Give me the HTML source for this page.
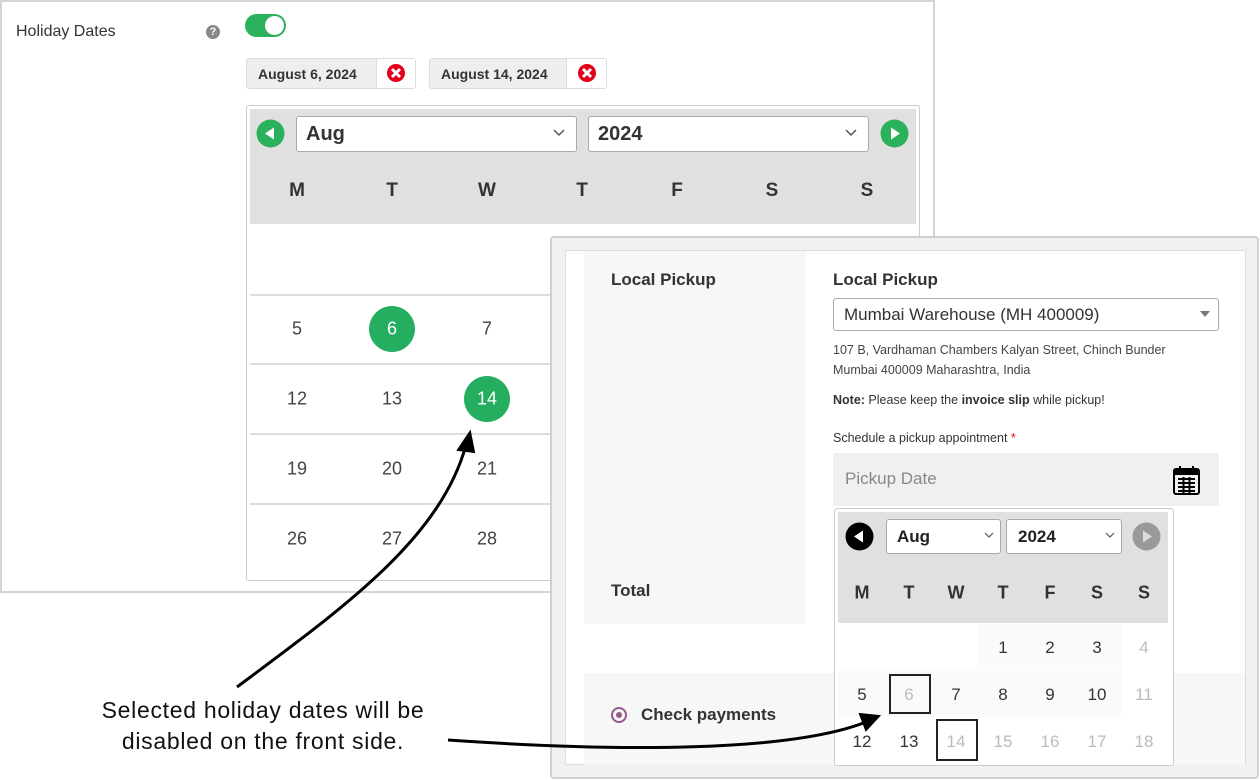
<!DOCTYPE html>
<html><head><meta charset="utf-8"><style>
*{margin:0;padding:0;box-sizing:border-box}
body{width:1260px;height:780px;background:#fff;position:relative;overflow:hidden;font-family:"Liberation Sans",sans-serif;color:#333}
.a{position:absolute}
.c{position:absolute;transform:translate(-50%,-50%);white-space:nowrap}
.ln{position:absolute;left:250px;width:666px;height:2px;background:#ddd}
.d{font-size:18px;color:#444}
.hd{font-size:19px;font-weight:bold;color:#333}
.s{font-family:"Liberation Sans Narrow","Liberation Sans",sans-serif}
.rd{font-size:17px;color:#333}
.rg{font-size:17px;color:#bbb}
.rh{font-size:18px;font-weight:bold;color:#333}
</style></head><body>
<div class="a" style="left:0;top:0;width:935px;height:593px;border:2px solid #d4d4d4;background:#fff"></div>
<div class="a" style="left:16px;top:23px;font-size:16px;color:#333">Holiday Dates</div>
<div class="a" style="left:206px;top:25px;width:14px;height:14px;border-radius:50%;background:#888;color:#fff;font-size:11px;font-weight:bold;text-align:center;line-height:14px">?</div>
<div class="a" style="left:245px;top:14px;width:41px;height:23px;border-radius:12px;background:#2bb15c"></div>
<div class="a" style="left:265px;top:16px;width:19px;height:19px;border-radius:50%;background:#fff"></div>
<div class="a" style="left:246px;top:58px;width:170px;height:31px;border:1px solid #ddd;border-radius:3px;background:#eee"></div>
<div class="a" style="left:376px;top:59px;width:39px;height:29px;background:#fff;border-left:1px solid #ddd"></div>
<div class="a" style="left:258px;top:66px;font-size:14px;font-weight:bold;color:#333">August 6, 2024</div>
<div class="a" style="left:429px;top:58px;width:178px;height:31px;border:1px solid #ddd;border-radius:3px;background:#eee"></div>
<div class="a" style="left:566px;top:59px;width:40px;height:29px;background:#fff;border-left:1px solid #ddd"></div>
<div class="a" style="left:441px;top:66px;font-size:14px;font-weight:bold;color:#333">August 14, 2024</div>
<svg class="a" style="left:386px;top:63px" width="20" height="20"><circle cx="10" cy="10" r="9" fill="#e3001b"/><path d="M6 6L14 14M14 6L6 14" stroke="#fff" stroke-width="3"/></svg>
<svg class="a" style="left:577px;top:63px" width="20" height="20"><circle cx="10" cy="10" r="9" fill="#e3001b"/><path d="M6 6L14 14M14 6L6 14" stroke="#fff" stroke-width="3"/></svg>
<div class="a" style="left:246px;top:105px;width:674px;height:476px;border:1px solid #ccc;border-radius:3px;background:#fff"></div>
<div class="a" style="left:250px;top:109px;width:666px;height:115px;background:#e0e0e0"></div>
<svg class="a" style="left:256px;top:119px" width="29" height="29"><circle cx="14.5" cy="14.5" r="14" fill="#2bb15c"/><path d="M9 14.5L18 8.5V20.5Z" fill="#fff"/></svg>
<svg class="a" style="left:880px;top:119px" width="29" height="29"><circle cx="14.5" cy="14.5" r="14" fill="#2bb15c"/><path d="M20 14.5L11 8.5V20.5Z" fill="#fff"/></svg>
<div class="a" style="left:296px;top:116px;width:281px;height:36px;background:#fff;border:1px solid #aaa;border-radius:3px"></div>
<div class="a" style="left:306px;top:123px;font-size:20px;font-weight:bold;color:#333">Aug</div>
<div class="a" style="left:588px;top:116px;width:281px;height:36px;background:#fff;border:1px solid #aaa;border-radius:3px"></div>
<div class="a" style="left:598px;top:123px;font-size:20px;font-weight:bold;color:#333">2024</div>
<svg class="a" style="left:552px;top:128px" width="14" height="10"><path d="M2 2L7 7L12 2" stroke="#555" stroke-width="1.5" fill="none"/></svg>
<svg class="a" style="left:844px;top:128px" width="14" height="10"><path d="M2 2L7 7L12 2" stroke="#555" stroke-width="1.5" fill="none"/></svg>
<div class="c hd" style="left:297px;top:191px">M</div><div class="c hd" style="left:392px;top:191px">T</div><div class="c hd" style="left:487px;top:191px">W</div><div class="c hd" style="left:582px;top:191px">T</div><div class="c hd" style="left:677px;top:191px">F</div><div class="c hd" style="left:772px;top:191px">S</div><div class="c hd" style="left:867px;top:191px">S</div>
<div class="ln" style="top:294px"></div><div class="ln" style="top:363px"></div><div class="ln" style="top:433px"></div><div class="ln" style="top:503px"></div>
<div class="a" style="left:369px;top:306px;width:46px;height:46px;border-radius:50%;background:#25ae5f"></div>
<div class="a" style="left:464px;top:376px;width:46px;height:46px;border-radius:50%;background:#25ae5f"></div>
<div class="c d" style="left:297px;top:329px">5</div><div class="c d" style="left:392px;top:329px;color:#fff">6</div><div class="c d" style="left:487px;top:329px">7</div>
<div class="c d" style="left:297px;top:399px">12</div><div class="c d" style="left:392px;top:399px">13</div><div class="c d" style="left:487px;top:399px;color:#fff">14</div>
<div class="c d" style="left:297px;top:469px">19</div><div class="c d" style="left:392px;top:469px">20</div><div class="c d" style="left:487px;top:469px">21</div>
<div class="c d" style="left:297px;top:539px">26</div><div class="c d" style="left:392px;top:539px">27</div><div class="c d" style="left:487px;top:539px">28</div>
<div class="a" style="left:550px;top:236px;width:709px;height:543px;border:2px solid #d0d0d0;border-radius:4px;background:#f1f1f2"></div>
<div class="a" style="left:565px;top:250px;width:681px;height:515px;border:1px solid #ddd;background:#fff"></div>
<div class="a" style="left:584px;top:251px;width:222px;height:373px;background:#f7f7f7"></div>
<div class="a" style="left:584px;top:673px;width:661px;height:92px;background:#f7f7f7"></div>
<div class="a s" style="left:611px;top:270px;font-size:17px;font-weight:bold;color:#333">Local Pickup</div>
<div class="a s" style="left:833px;top:270px;font-size:17px;font-weight:bold;color:#333">Local Pickup</div>
<div class="a" style="left:833px;top:298px;width:386px;height:33px;border:1px solid #aaa;border-radius:3px;background:#fff"></div>
<div class="a s" style="left:844px;top:305px;font-size:17px;color:#333">Mumbai Warehouse (MH 400009)</div>
<svg class="a" style="left:1200px;top:311px" width="10" height="7"><path d="M0 0H10L5 6Z" fill="#777"/></svg>
<div class="a s" style="left:833px;top:340px;font-size:12.5px;color:#444;line-height:20px">107 B, Vardhaman Chambers Kalyan Street, Chinch Bunder<br>Mumbai 400009 Maharashtra, India</div>
<div class="a s" style="left:833px;top:393px;font-size:12.5px;color:#333"><b>Note:</b> Please keep the <b>invoice slip</b> while pickup!</div>
<div class="a s" style="left:833px;top:431px;font-size:12.5px;color:#333">Schedule a pickup appointment <span style="color:#e00">*</span></div>
<div class="a" style="left:833px;top:453px;width:386px;height:53px;background:#f0f0f0"></div>
<div class="a s" style="left:845px;top:469px;font-size:17px;color:#888">Pickup Date</div>
<svg class="a" style="left:1172px;top:465px" width="30" height="31"><rect x="2" y="4" width="25" height="25" rx="2" fill="none" stroke="#000" stroke-width="2"/><rect x="2" y="4" width="25" height="6" fill="#000"/><path d="M8 1v6M21 1v6" stroke="#000" stroke-width="2"/><path d="M6 14h17M6 18h17M6 22h17M6 26h17M11.5 12v16M17.5 12v16" stroke="#000" stroke-width="2"/></svg>
<div class="a s" style="left:611px;top:581px;font-size:17px;font-weight:bold;color:#333">Total</div>
<svg class="a" style="left:610px;top:706px" width="18" height="18"><circle cx="9" cy="9" r="7" fill="none" stroke="#96588a" stroke-width="2"/><circle cx="9" cy="9" r="3" fill="#96588a"/></svg>
<div class="a s" style="left:641px;top:705px;font-size:17px;font-weight:bold;color:#333">Check payments</div>
<div class="a" style="left:834px;top:508px;width:340px;height:258px;border:1px solid #ccc;border-radius:3px;background:#fff"></div>
<div class="a" style="left:838px;top:512px;width:330px;height:111px;background:#e0e0e0"></div>
<div class="a" style="left:977px;top:624px;width:144px;height:46px;background:#fafafa"></div>
<div class="a" style="left:838px;top:671px;width:283px;height:46px;background:#fafafa"></div>
<svg class="a" style="left:845px;top:522px" width="29" height="29"><circle cx="14.5" cy="14.5" r="14" fill="#000"/><path d="M9 14.5L18 8.5V20.5Z" fill="#fff"/></svg>
<svg class="a" style="left:1132px;top:522px" width="29" height="29"><circle cx="14.5" cy="14.5" r="14" fill="#999"/><path d="M20 14.5L11 8.5V20.5Z" fill="#ddd"/></svg>
<div class="a" style="left:886px;top:519px;width:115px;height:35px;background:#fff;border:1px solid #aaa;border-radius:3px"></div>
<div class="a" style="left:1006px;top:519px;width:116px;height:35px;background:#fff;border:1px solid #aaa;border-radius:3px"></div>
<div class="a s" style="left:897px;top:527px;font-size:17px;font-weight:bold;color:#222">Aug</div>
<div class="a s" style="left:1018px;top:527px;font-size:17px;font-weight:bold;color:#222">2024</div>
<svg class="a" style="left:984px;top:531px" width="10" height="8"><path d="M1 2L5 6L9 2" stroke="#555" stroke-width="1.2" fill="none"/></svg>
<svg class="a" style="left:1105px;top:531px" width="10" height="8"><path d="M1 2L5 6L9 2" stroke="#555" stroke-width="1.2" fill="none"/></svg>
<div class="c rh" style="left:862px;top:593px">M</div><div class="c rh" style="left:909px;top:593px">T</div><div class="c rh" style="left:956px;top:593px">W</div><div class="c rh" style="left:1003px;top:593px">T</div><div class="c rh" style="left:1050px;top:593px">F</div><div class="c rh" style="left:1097px;top:593px">S</div><div class="c rh" style="left:1144px;top:593px">S</div>
<div class="c rd" style="left:1003px;top:648px">1</div><div class="c rd" style="left:1050px;top:648px">2</div><div class="c rd" style="left:1097px;top:648px">3</div><div class="c rg" style="left:1144px;top:648px">4</div>
<div class="a" style="left:889px;top:674px;width:42px;height:40px;border:2px solid #222"></div>
<div class="a" style="left:936px;top:719px;width:42px;height:42px;border:2px solid #222"></div>
<div class="c rd" style="left:862px;top:695px">5</div><div class="c rg" style="left:909px;top:695px">6</div><div class="c rd" style="left:956px;top:695px">7</div><div class="c rd" style="left:1003px;top:695px">8</div><div class="c rd" style="left:1050px;top:695px">9</div><div class="c rd" style="left:1097px;top:695px">10</div><div class="c rg" style="left:1144px;top:695px">11</div>
<div class="c rd" style="left:862px;top:742px">12</div><div class="c rd" style="left:909px;top:742px">13</div><div class="c rg" style="left:956px;top:742px">14</div><div class="c rg" style="left:1003px;top:742px">15</div><div class="c rg" style="left:1050px;top:742px">16</div><div class="c rg" style="left:1097px;top:742px">17</div><div class="c rg" style="left:1144px;top:742px">18</div>
<div class="a" style="left:40px;top:695px;width:446px;text-align:center;font-size:23px;letter-spacing:0.7px;color:#111;line-height:31px">Selected holiday dates will be<br>disabled on the front side.</div>
<svg class="a" style="left:0;top:0" width="1260" height="780">
<path d="M237 687C340 610 440 540 466 445" stroke="#000" stroke-width="3" fill="none"/>
<path d="M470 432L458 450L474 452Z" fill="#000" stroke="#000" stroke-width="2"/>
<path d="M448 740C620 752 790 752 866 722" stroke="#000" stroke-width="3" fill="none"/>
<path d="M879 716L860 714L866 730Z" fill="#000" stroke="#000" stroke-width="2"/>
</svg>
</body></html>
